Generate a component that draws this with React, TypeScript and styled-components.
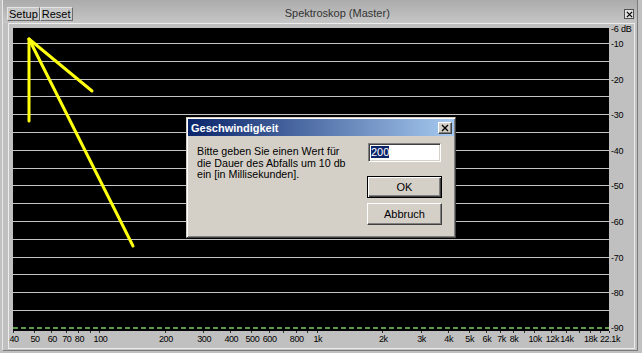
import React from "react";
import styled, { createGlobalStyle } from "styled-components";

const GlobalStyle = createGlobalStyle`
  html, body {
    margin: 0;
    padding: 0;
    background: #c0c0c0;
  }
  body {
    font-family: "Liberation Sans", Arial, sans-serif;
  }
`;

const PLOT_W = 596;
const PLOT_H = 303;
const F_MIN = 40;
const F_MAX = 22100;

const freqX = (f: number) =>
  (PLOT_W * Math.log(f / F_MIN)) / Math.log(F_MAX / F_MIN);
const gridY = (k: number) => Math.round(15 + 17.8 * k) + 0.5;

const freqLabels: [number, string][] = [
  [40, "40"], [50, "50"], [60, "60"], [70, "70"], [80, "80"], [100, "100"],
  [200, "200"], [300, "300"], [400, "400"], [500, "500"], [600, "600"],
  [800, "800"], [1000, "1k"], [2000, "2k"], [3000, "3k"], [4000, "4k"],
  [5000, "5k"], [6000, "6k"], [7000, "7k"], [8000, "8k"], [10000, "10k"],
  [12000, "12k"], [14000, "14k"], [18000, "18k"], [22100, "22.1k"],
];
const extraTicks = [90, 700, 900, 9000, 16000, 20000];

const dbLabels: [number, string][] = [
  [1, "-6 dB"],
  [gridY(0), "-10"],
  [gridY(2), "-20"],
  [gridY(4), "-30"],
  [gridY(6), "-40"],
  [gridY(8), "-50"],
  [gridY(10), "-60"],
  [gridY(12), "-70"],
  [gridY(14), "-80"],
  [300, "-90"],
];

const Window = styled.div`
  position: relative;
  width: 642px;
  height: 353px;
  box-sizing: border-box;
  padding: 0 4px 2px 2px;
  background: #c0c0c0;
  display: flex;
  overflow: hidden;
`;

const Frame = styled.div`
  flex: 1;
  display: flex;
  flex-direction: column;
  border-left: 1px solid #e8e8e8;
  border-right: 1px solid #7c7c7c;
  border-bottom: 1px solid #7c7c7c;
`;

const Header = styled.div`
  height: 23px;
  flex: none;
  display: flex;
  align-items: flex-start;
  padding: 7px 2px 0 4px;
  box-sizing: border-box;
  background: linear-gradient(#ababab, #c6c6c6);
`;

const ToolButton = styled.button`
  height: 14px;
  padding: 0 1px;
  margin: 0;
  font: 11px/12px "Liberation Sans", Arial, sans-serif;
  color: #000;
  background: #c8c8c8;
  border: 1px solid;
  border-color: #e4e4e4 #6c6c6c #6c6c6c #e4e4e4;
  cursor: default;
`;

const Title = styled.div`
  flex: 1;
  text-align: center;
  padding-right: 22px;
  font-size: 11px;
  line-height: 12px;
  color: #333;
`;

const CloseBox = styled.div`
  width: 8px;
  height: 8px;
  margin-top: 2px;
  margin-right: 1px;
  border: 1px solid #505050;
  background: #e2e2e2;
  display: grid;
  place-items: center;
`;

const Panel = styled.div`
  flex: 1;
  margin: 0 2px 1px 5px;
  padding: 4px 0 0 4px;
  border: 1px solid #ececec;
  display: grid;
  grid-template-columns: ${PLOT_W}px 1fr;
  grid-template-rows: ${PLOT_H}px 1fr;
`;

const Plot = styled.div`
  background: #000;
  position: relative;

  svg {
    display: block;
  }
`;

const DbScale = styled.div`
  position: relative;
`;

const DbLabel = styled.span`
  position: absolute;
  left: 2px;
  font-size: 9px;
  line-height: 10px;
  letter-spacing: -0.2px;
  color: #000;
  white-space: nowrap;
  transform: translateY(-50%);
`;

const FreqAxis = styled.div`
  position: relative;
`;

const Tick = styled.span`
  position: absolute;
  top: 0;
  width: 1px;
  height: 2px;
  background: #303030;
`;

const FreqLabel = styled.span`
  position: absolute;
  top: 3px;
  font-size: 9px;
  line-height: 10px;
  letter-spacing: -0.4px;
  color: #000;
  white-space: nowrap;
  transform: translateX(-50%);
`;

/* dialog, win2000 style */

const Dialog = styled.div`
  position: absolute;
  left: 186px;
  top: 117px;
  width: 270px;
  height: 121px;
  box-sizing: border-box;
  padding: 1px;
  background: #d4d0c8;
  border: 1px solid;
  border-color: #d4d0c8 #404040 #404040 #d4d0c8;
  box-shadow: inset 1px 1px #fff, inset -1px -1px #808080;
  display: flex;
  flex-direction: column;
  font-family: "Liberation Sans", Arial, sans-serif;
`;

const DialogTitle = styled.div`
  height: 17px;
  display: flex;
  align-items: center;
  justify-content: space-between;
  padding: 0 2px 0 3px;
  background: linear-gradient(90deg, #0a246a, #a6caf0);
  color: #fff;
  font-weight: bold;
  font-size: 11px;
`;

const TitleClose = styled.div`
  width: 14px;
  height: 12px;
  box-sizing: border-box;
  background: #d4d0c8;
  border: 1px solid;
  border-color: #fff #404040 #404040 #fff;
  box-shadow: inset -1px -1px #808080;
  display: grid;
  place-items: center;
`;

const DialogBody = styled.div`
  flex: 1;
  display: flex;
  padding: 7px 12px 0 9px;
`;

const Message = styled.div`
  flex: 1;
  margin-top: 3px;
  font-size: 10.7px;
  line-height: 11.5px;
  color: #000;
`;

const Side = styled.div`
  width: 75px;
  display: flex;
  flex-direction: column;
`;

const Field = styled.div`
  width: 73px;
  height: 19px;
  margin-left: 1px;
  box-sizing: border-box;
  background: #fff;
  border: 1px solid;
  border-color: #808080 #fff #fff #808080;
  box-shadow: inset 1px 1px #404040, inset -1px -1px #d4d0c8;
  padding: 2px 0 0 2px;
  font-size: 11px;
  line-height: 13px;
`;

const Selected = styled.span`
  background: #0a246a;
  color: #fff;
`;

const DlgButton = styled.button<{ $default?: boolean }>`
  width: 75px;
  height: 22px;
  margin: 0;
  padding: 0;
  box-sizing: border-box;
  background: #d4d0c8;
  font: 11px "Liberation Sans", Arial, sans-serif;
  color: #000;
  cursor: default;
  border: 1px solid;
  border-color: ${(p) => (p.$default ? "#000" : "#fff #404040 #404040 #fff")};
  box-shadow: ${(p) =>
    p.$default
      ? "inset 1px 1px #fff, inset -1px -1px #404040, inset -2px -2px #808080"
      : "inset -1px -1px #808080"};
  & + & {
    margin-top: 5px;
  }
`;

const ButtonStack = styled.div`
  margin-top: 14px;
  display: flex;
  flex-direction: column;
`;

const XGlyph = ({ size }: { size: number }) => (
  <svg width={size} height={size} viewBox="0 0 8 8">
    <path d="M1 1 L7 7 M7 1 L1 7" stroke="#000" strokeWidth="1.4" />
  </svg>
);

const Spectrum = () => (
  <svg width={PLOT_W} height={PLOT_H}>
    {Array.from({ length: 16 }, (_, k) => (
      <line
        key={k}
        x1={0}
        x2={PLOT_W}
        y1={gridY(k)}
        y2={gridY(k)}
        stroke="#c4c4c4"
        strokeWidth={1}
      />
    ))}
    <line
      x1={0}
      x2={PLOT_W}
      y1={300}
      y2={300}
      stroke="#5a9a48"
      strokeWidth={2}
      strokeDasharray="5 3"
    />
    <g stroke="#ffff10" strokeWidth={3} strokeLinecap="round" fill="none">
      <line x1={16} y1={11} x2={16} y2={93} />
      <line x1={16} y1={11} x2={79} y2={63} />
      <line x1={16} y1={11} x2={120} y2={218} />
    </g>
  </svg>
);

export default function App() {
  return (
    <>
      <GlobalStyle />
      <Window>
        <Frame>
          <Header>
            <ToolButton>Setup</ToolButton>
            <ToolButton>Reset</ToolButton>
            <Title>Spektroskop (Master)</Title>
            <CloseBox>
              <XGlyph size={7} />
            </CloseBox>
          </Header>
          <Panel>
            <Plot>
              <Spectrum />
            </Plot>
            <DbScale>
              {dbLabels.map(([y, text]) => (
                <DbLabel key={text} style={{ top: y }}>
                  {text}
                </DbLabel>
              ))}
            </DbScale>
            <FreqAxis>
              {[...freqLabels.map(([f]) => f), ...extraTicks].map((f) => (
                <Tick key={f} style={{ left: Math.round(freqX(f)) }} />
              ))}
              {freqLabels.map(([f, text]) => (
                <FreqLabel key={text} style={{ left: freqX(f) + 1 }}>
                  {text}
                </FreqLabel>
              ))}
            </FreqAxis>
          </Panel>
        </Frame>

        <Dialog>
          <DialogTitle>
            <span>Geschwindigkeit</span>
            <TitleClose>
              <XGlyph size={8} />
            </TitleClose>
          </DialogTitle>
          <DialogBody>
            <Message>
              Bitte geben Sie einen Wert für
              <br />
              die Dauer des Abfalls um 10 db
              <br />
              ein [in Millisekunden].
            </Message>
            <Side>
              <Field>
                <Selected>200</Selected>
              </Field>
              <ButtonStack>
                <DlgButton $default>OK</DlgButton>
                <DlgButton>Abbruch</DlgButton>
              </ButtonStack>
            </Side>
          </DialogBody>
        </Dialog>
      </Window>
    </>
  );
}
